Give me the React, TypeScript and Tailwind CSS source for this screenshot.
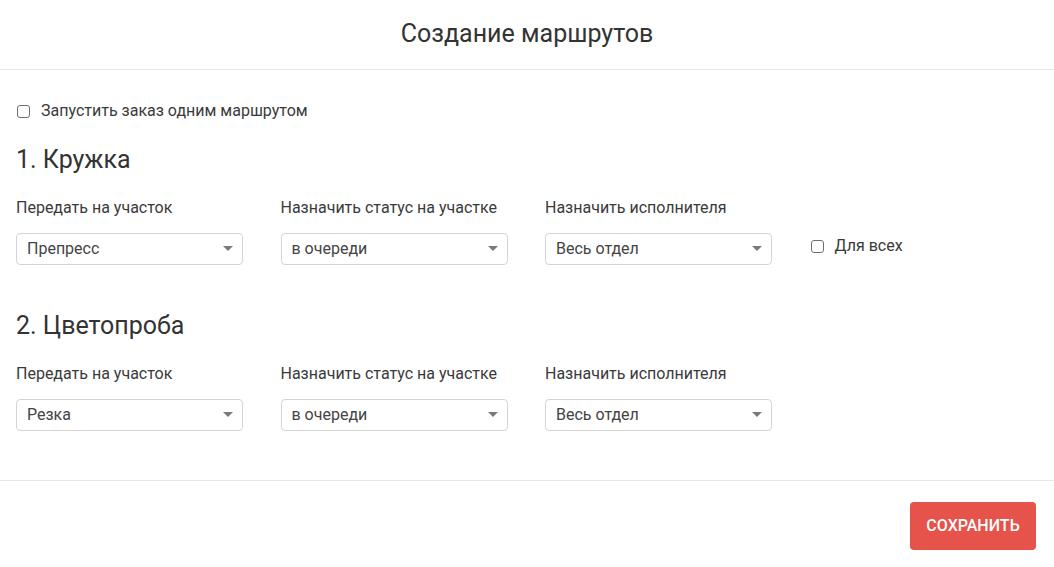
const font = { fontFamily: 'Roboto, "Noto Sans", sans-serif' };

function Check({ label }: { label: string }) {
  return (
    <label className="flex items-center gap-[11px] text-[16px] leading-5 text-[#3a3a3a]">
      <span className="ml-[1px] w-[13px] h-[13px] rounded-[3px] border border-[#707070] bg-white shrink-0" />
      {label}
    </label>
  );
}

function Select({ value }: { value: string }) {
  return (
    <div className="w-[227px] h-[32px] border border-[#d4d4d4] rounded-[4px] bg-white flex items-center justify-between pl-[10px] pr-[7px] text-[16px] text-[#444]">
      <span>{value}</span>
      <svg width="12" height="6" viewBox="0 0 12 6" className="mr-[1px]">
        <path d="M1 0 L11 0 L6 5 Z" fill="#7a7a7a" />
      </svg>
    </div>
  );
}

function Stage({ title, values, forAll }: { title: string; values: string[]; forAll?: boolean }) {
  const labels = ['Передать на участок', 'Назначить статус на участке', 'Назначить исполнителя'];
  return (
    <div>
      <h2 className="text-[25px] leading-8 text-[#333]">{title}</h2>
      <div className="mt-[22px] flex gap-[37.5px]">
        {labels.map((l, i) => (
          <div key={l} className="flex flex-col w-[227px]">
            <div className="text-[16px] leading-5 text-[#3a3a3a]">{l}</div>
            <div className="mt-[15px]">
              <Select value={values[i]} />
            </div>
          </div>
        ))}
        {forAll && (
          <div className="flex items-end pb-[9px]">
            <Check label="Для всех" />
          </div>
        )}
      </div>
    </div>
  );
}

export default function App() {
  return (
    <div className="w-[1054px] h-[567px] bg-white" style={font}>
      <div className="h-[70px] flex items-center justify-center border-b border-[#e8e8e8]">
        <h1 className="text-[25px] text-[#333] pb-[1px]">Создание маршрутов</h1>
      </div>
      <div className="px-4 pt-[31px] pb-[49px]">
        <Check label="Запустить заказ одним маршрутом" />
        <div className="mt-[23px]">
          <Stage title="1. Кружка" values={['Препресс', 'в очереди', 'Весь отдел']} forAll />
        </div>
        <div className="mt-[45px]">
          <Stage title="2. Цветопроба" values={['Резка', 'в очереди', 'Весь отдел']} />
        </div>
      </div>
      <div className="border-t border-[#e8e8e8] flex justify-end pt-[21px] pr-[18px]">
        <button className="w-[126px] h-[48px] rounded-[4px] bg-[#e5534b] text-white text-[16px] font-medium">
          СОХРАНИТЬ
        </button>
      </div>
    </div>
  );
}
